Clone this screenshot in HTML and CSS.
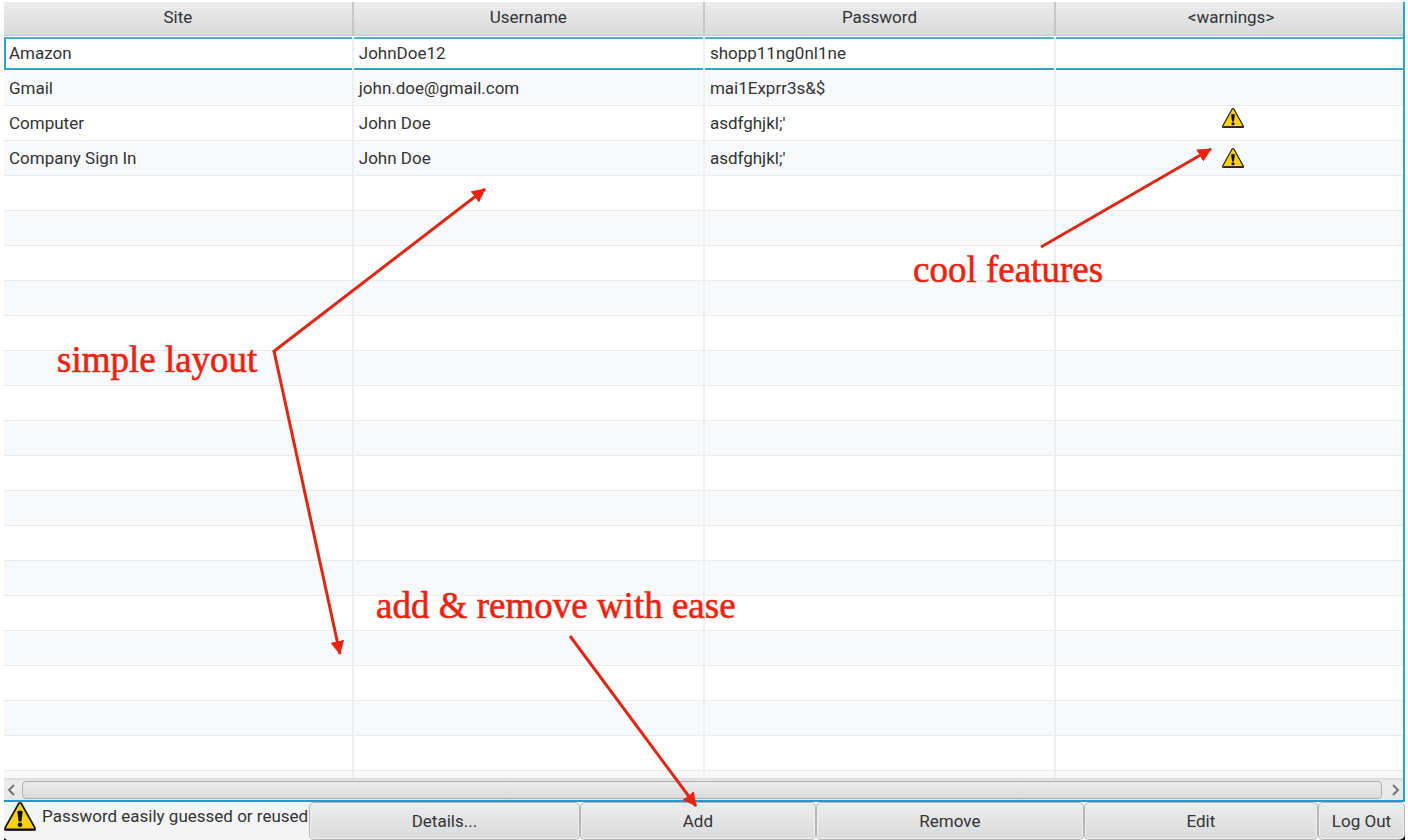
FILE: index.html
```html
<!DOCTYPE html>
<html lang="en">
<head>
<meta charset="utf-8">
<title>Password Manager</title>
<link rel="stylesheet" href="styles.css">
</head>
<body>
<svg class="defs" aria-hidden="true">
  <symbol id="warning" viewBox="0 0 32 29">
    <path d="M15 1h2l14 25v2H1v-2z" fill="#fdd017" stroke="#111" stroke-width="1.6" stroke-linejoin="round"/>
    <path d="M2 27.500h29" stroke="#111" stroke-width="2"/>
    <path d="M13.300 9.500q2.700-2 5.400 0l-1.300 10h-2.800z" fill="#111"/>
    <circle cx="16" cy="22.800" r="2.300" fill="#111"/>
  </symbol>
</svg>
<main class="window">
  <section class="grid">
    <div class="rows">
      <table class="accounts">
        <colgroup><col class="col-site"><col class="col-text"><col class="col-text"><col></colgroup>
        <thead>
          <tr><th>Site</th><th>Username</th><th>Password</th><th>&lt;warnings&gt;</th></tr>
        </thead>
        <tbody>
          <tr class="selected"><td>Amazon</td><td>JohnDoe12</td><td>shopp11ng0nl1ne</td><td></td></tr>
          <tr><td>Gmail</td><td>john.doe@gmail.com</td><td>mai1Exprr3s&amp;$</td><td></td></tr>
          <tr><td>Computer</td><td>John Doe</td><td>asdfghjkl;'</td><td class="flag flag-top"><svg class="flag-icon" role="img" aria-label="Warning"><use href="#warning"/></svg></td></tr>
          <tr><td>Company Sign In</td><td>John Doe</td><td>asdfghjkl;'</td><td class="flag"><svg class="flag-icon" role="img" aria-label="Warning"><use href="#warning"/></svg></td></tr>
          <tr><td></td><td></td><td></td><td></td></tr>
          <tr><td></td><td></td><td></td><td></td></tr>
          <tr><td></td><td></td><td></td><td></td></tr>
          <tr><td></td><td></td><td></td><td></td></tr>
          <tr><td></td><td></td><td></td><td></td></tr>
          <tr><td></td><td></td><td></td><td></td></tr>
          <tr><td></td><td></td><td></td><td></td></tr>
          <tr><td></td><td></td><td></td><td></td></tr>
          <tr><td></td><td></td><td></td><td></td></tr>
          <tr><td></td><td></td><td></td><td></td></tr>
          <tr><td></td><td></td><td></td><td></td></tr>
          <tr><td></td><td></td><td></td><td></td></tr>
          <tr><td></td><td></td><td></td><td></td></tr>
          <tr><td></td><td></td><td></td><td></td></tr>
          <tr><td></td><td></td><td></td><td></td></tr>
          <tr><td></td><td></td><td></td><td></td></tr>
          <tr><td></td><td></td><td></td><td></td></tr>
          <tr><td></td><td></td><td></td><td></td></tr>
        </tbody>
      </table>
    </div>
    <div class="scrollbar">
      <button class="scroll-arrow" aria-label="Scroll left"><svg width="8" height="12" viewBox="0 0 8 12"><path d="M7 1L2 6l5 5"/></svg></button>
      <div class="thumb"></div>
      <button class="scroll-arrow scroll-right" aria-label="Scroll right"><svg width="8" height="12" viewBox="0 0 8 12"><path d="M1 1l5 5-5 5"/></svg></button>
    </div>
  </section>
  <footer class="toolbar">
    <p class="legend"><svg class="legend-icon" aria-hidden="true"><use href="#warning"/></svg><span>Password easily guessed or reused</span></p>
    <button class="action details">Details...</button>
    <button class="action add">Add</button>
    <button class="action remove">Remove</button>
    <button class="action edit">Edit</button>
    <button class="action logout">Log Out</button>
  </footer>
</main>
<svg class="notes" viewBox="0 0 1408 840">
  <defs>
    <marker id="head" viewBox="0 0 14 14" refX="13" refY="7" markerWidth="14" markerHeight="14" markerUnits="userSpaceOnUse" orient="auto"><path d="M0 0l14 7-14 7z"/></marker>
  </defs>
  <path class="arrow" d="M273 352L485 189"/>
  <path class="arrow" d="M274 351L340 654"/>
  <path class="arrow" d="M1041 247L1211 149"/>
  <path class="arrow" d="M570 636L696 806"/>
  <text x="57" y="372">simple layout</text>
  <text x="913" y="282">cool features</text>
  <text x="376" y="618">add &amp; remove with ease</text>
  <path class="corner" d="M4 838l3 2H4zM1405 835v5h-6q5-1 6-5z"/>
</svg>
</body>
</html>
```
FILE: styles.css
```css
* { box-sizing: border-box; }

body {
  margin: 0;
  background: #fff;
  color: #323336;
  font: 17px/22px Roboto, "Liberation Sans", sans-serif;
}

button {
  font: inherit;
  color: inherit;
}

.defs {
  position: absolute;
  width: 0;
  height: 0;
}

.window {
  display: flex;
  flex-direction: column;
  height: 100vh;
  padding: 2px 3px 0 4px;
}

.grid {
  flex: 1;
  min-height: 0;
  display: flex;
  flex-direction: column;
  border-right: 2px solid #27a8c9;
  border-bottom: 2px solid #1c9fc6;
}

.rows {
  flex: 1;
  min-height: 0;
  overflow: hidden;
}

.accounts {
  width: 100%;
  table-layout: fixed;
  border-collapse: separate;
  border-spacing: 0;
}

.col-site { width: 25%; }
.col-text { width: 25.1%; }

.accounts th {
  height: 34px;
  padding: 0 0 3px;
  font-weight: 400;
  text-align: center;
  background: linear-gradient(#ececed, #d8d9da);
  border-right: 2px solid #c6c7c8;
  border-bottom: 1px solid #c8c9ca;
}

.accounts td {
  height: 35px;
  padding: 0 5px;
  border-right: 2px solid #eeeff0;
  border-bottom: 1px solid #e9eaec;
}

.accounts th:last-child,
.accounts td:last-child { border-right: 0; }

.accounts th:last-child { padding-left: 3px; }

.accounts tr:nth-child(even) td { background: #f8f9fb; }

.accounts .selected td {
  border-bottom-color: #fff;
  box-shadow: inset 0 -2px #2ba7c5, inset 0 1px #fff, inset 0 3px #4cb3cb;
}

.accounts .selected td:first-child {
  box-shadow: inset 0 -2px #2ba7c5, inset 0 1px #fff, inset 0 3px #4cb3cb, inset 2px 0 #2ba7c5;
}

.accounts .flag {
  text-align: center;
  line-height: 0;
  padding: 0 0 0 6px;
}

.accounts .flag-top {
  vertical-align: top;
  padding-top: 2px;
}

.flag-icon {
  width: 22px;
  height: 20px;
}

.scrollbar {
  display: flex;
  height: 22px;
  padding: 3px 0 1px;
  background: linear-gradient(#d9dadb, #ededee 4px, #e6e7e8);
}

.scroll-arrow {
  width: 18px;
  padding: 0 3px;
  border: 0;
  background: none;
  display: flex;
  align-items: center;
  justify-content: flex-start;
}

.scroll-right {
  width: 21px;
  justify-content: flex-end;
}

.scroll-arrow path {
  fill: none;
  stroke: #727375;
  stroke-width: 2;
}

.thumb {
  flex: 1;
  border: 1px solid #adaeb0;
  border-radius: 4px;
  background: linear-gradient(#ececed, #dadbdc);
}

.toolbar {
  display: flex;
  height: 38px;
  background: #f4f4f5;
}

.legend {
  flex: 0 0 305px;
  margin: 0;
  display: flex;
  gap: 6px;
  align-items: flex-start;
  white-space: nowrap;
}

.legend span { padding-top: 3px; }

.legend-icon {
  width: 32px;
  height: 29px;
}

.action {
  padding: 0;
  border: 1px solid #b4b5b7;
  border-radius: 5px;
  background: linear-gradient(#ededee, #d9dadb);
  box-shadow: inset 0 0 0 1px #f0f0f1;
}

.details { flex: 271; }
.add { flex: 236; }
.remove { flex: 268; }
.edit { flex: 234; }
.logout { flex: 0 0 87px; }

.notes {
  position: absolute;
  top: 0;
  left: 0;
  width: 100%;
  height: 100%;
  pointer-events: none;
  font: 37px "Liberation Serif", serif;
  fill: #ea2412;
}

.notes text {
  stroke: #ea2412;
  stroke-width: 0.6px;
}

.arrow {
  fill: none;
  stroke: #dd2816;
  stroke-width: 3;
  marker-end: url(#head);
}

.corner { fill: #111; }
```
